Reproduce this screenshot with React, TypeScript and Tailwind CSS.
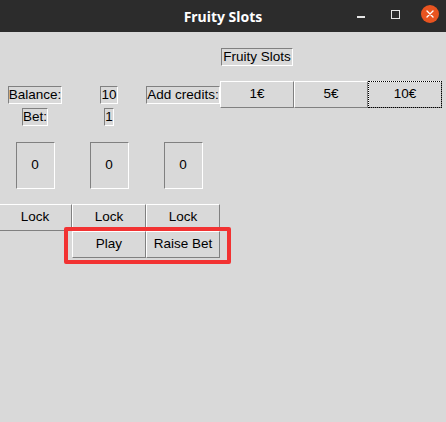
import React from "react";

const sunken =
  "border border-t-[#808080] border-l-[#808080] border-b-white border-r-white leading-[16px]";
const raised =
  "flex items-center justify-center border border-t-white border-l-white border-b-[#808080] border-r-[#808080]";

export default function App() {
  return (
    <div
      className="relative w-[446px] h-[422px] overflow-hidden bg-[#d9d9d9] text-black text-[13.5px]"
      style={{ fontFamily: '"Liberation Sans", Arial, sans-serif' }}
    >
      {/* window title bar */}
      <div className="grid grid-cols-[1fr_auto_1fr] h-[32px] bg-[#2c2c2c]">
        <div />
        <div
          className="self-center text-white font-bold text-[14px]"
          style={{ fontFamily: '"Noto Sans", sans-serif' }}
        >
          Fruity Slots
        </div>
        <div className="flex items-start justify-end pr-[7px]">
          <div className="mt-[16px] w-[8px] h-[2px] bg-[#e6e6e6]" />
          <div className="mt-[10px] ml-[26px] w-[9px] h-[9px] border border-[#e6e6e6]" />
          <div className="mt-[5px] ml-[21px] w-[18px] h-[18px] rounded-full bg-[#e95420] flex items-center justify-center">
            <svg width="8" height="8" viewBox="0 0 8 8">
              <path d="M1 1 L7 7 M7 1 L1 7" stroke="white" strokeWidth="1.4" strokeLinecap="round" />
            </svg>
          </div>
        </div>
      </div>

      {/* tk grid, first column is partly cut off by the window edge */}
      <div className="-ml-[2px] grid grid-cols-[74px_74px_74px_74px_74px_74px] grid-rows-[49px_27px_18px_78px_27px_27px]">
        <div className={`col-start-4 row-start-1 self-center justify-self-center px-[1px] ${sunken}`}>
          Fruity Slots
        </div>

        <div className={`col-start-1 row-start-2 self-center justify-self-center ${sunken}`}>Balance:</div>
        <div className={`col-start-2 row-start-2 self-center justify-self-center ${sunken}`}>10</div>
        <div className={`col-start-3 row-start-2 self-center justify-self-center ${sunken}`}>Add credits:</div>
        <div className={`col-start-4 row-start-2 ${raised}`}>1€</div>
        <div className={`col-start-5 row-start-2 ${raised}`}>5€</div>
        <div className={`col-start-6 row-start-2 ${raised} outline outline-1 outline-dotted outline-black -outline-offset-1`}>
          10€
        </div>

        <div className={`col-start-1 row-start-3 self-center justify-self-center ${sunken}`}>Bet:</div>
        <div className={`col-start-2 row-start-3 self-center justify-self-center ${sunken}`}>1</div>

        {[1, 2, 3].map((c) => (
          <div
            key={c}
            className={`row-start-4 self-center justify-self-center w-[39px] h-[47px] flex items-center justify-center ${sunken} ${
              c === 1 ? "col-start-1" : c === 2 ? "col-start-2" : "col-start-3"
            }`}
          >
            0
          </div>
        ))}

        <div className={`col-start-1 row-start-5 ${raised}`}>Lock</div>
        <div className={`col-start-2 row-start-5 ${raised}`}>Lock</div>
        <div className={`col-start-3 row-start-5 ${raised}`}>Lock</div>

        <div className={`col-start-2 row-start-6 ${raised}`}>Play</div>
        <div className={`col-start-3 row-start-6 ${raised}`}>Raise Bet</div>
      </div>

      {/* red highlight drawn over the screenshot */}
      <div className="absolute left-[64px] top-[227px] w-[167px] h-[37px] border-[4px] border-[#f23232] rounded-[2px]" />
    </div>
  );
}
